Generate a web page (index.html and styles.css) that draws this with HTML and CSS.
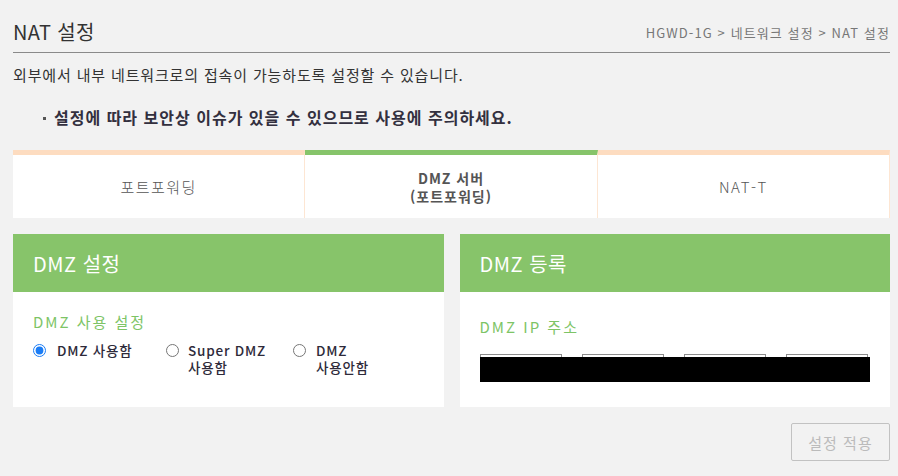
FILE: index.html
```html
<!DOCTYPE html>
<html lang="ko">
<head>
  <meta charset="UTF-8">
  <meta name="viewport" content="width=device-width, initial-scale=1.0">
  <title>NAT 설정</title>
  <link rel="stylesheet" href="styles.css">
</head>
<body>
  <div id="page">
    <!-- Title + breadcrumb -->
    <div class="page-head">
      <h1>NAT 설정</h1>
      <div class="crumb">HGWD-1G &gt; 네트워크 설정 &gt; NAT 설정</div>
    </div>
    <p class="desc">외부에서 내부 네트워크로의 접속이 가능하도록 설정할 수 있습니다.</p>
    <p class="notice">설정에 따라 보안상 이슈가 있을 수 있으므로 사용에 주의하세요.</p>

    <!-- Tabs -->
    <div class="tabs">
      <div class="tab">포트포워딩</div>
      <div class="tab active">DMZ 서버<br>(포트포워딩)</div>
      <div class="tab last">NAT-T</div>
    </div>

    <!-- Panels -->
    <div class="panels">
      <div class="panel">
        <div class="panel-head">DMZ 설정</div>
        <div class="panel-body">
          <div class="field-title">DMZ 사용 설정</div>
          <div class="radios">
            <label class="radio r1"><input type="radio" name="dmz" checked><span>DMZ 사용함</span></label>
            <label class="radio r2"><input type="radio" name="dmz"><span>Super DMZ<br>사용함</span></label>
            <label class="radio r3"><input type="radio" name="dmz"><span>DMZ<br>사용안함</span></label>
          </div>
        </div>
      </div>
      <div class="panel">
        <div class="panel-head">DMZ 등록</div>
        <div class="panel-body ip-body">
          <div class="field-title">DMZ IP 주소</div>
          <div class="ip-row">
            <input type="text" class="ip">
            <input type="text" class="ip">
            <input type="text" class="ip">
            <input type="text" class="ip">
            <div class="redact"></div>
          </div>
        </div>
      </div>
    </div>

    <div class="actions">
      <button class="btn" disabled>설정 적용</button>
    </div>
  </div>
</body>
</html>
```

FILE: styles.css
```css
body {
  margin: 0;
  padding: 0 8px 0 13px;
  background-color: #f2f2f2;
  font-family: "Noto Sans CJK KR", sans-serif;
  color: #333;
}
#page {
  width: 877px;
}
/* Title row */
.page-head {
  display: flex;
  justify-content: space-between;
  align-items: center;
  height: 40px;
  padding-top: 12px;
  border-bottom: 1px solid #8a8a8a;
}
.page-head h1 {
  margin: 0;
  font-size: 20px;
  font-weight: normal;
  line-height: 28px;
  letter-spacing: 0.3px;
  color: #333;
}
.crumb {
  font-size: 13px;
  color: #777;
  line-height: 18px;
  letter-spacing: 1.1px;
  margin-top: 2px;
}
.desc {
  margin: 11px 0 0;
  font-size: 15px;
  line-height: 22px;
  letter-spacing: 0.85px;
}
.notice {
  position: relative;
  margin: 19px 0 0;
  padding-left: 41px;
  font-size: 16px;
  font-weight: bold;
  line-height: 24px;
  letter-spacing: 1px;
  color: #33303f;
}
.notice::before {
  content: "";
  position: absolute;
  left: 30px;
  top: 12px;
  width: 3px;
  height: 3px;
  background: #555;
}
/* Tabs */
.tabs {
  display: grid;
  grid-template-columns: 1fr 1fr 1fr;
  margin-top: 21px;
}
.tab {
  height: 63px;
  display: flex;
  align-items: center;
  justify-content: center;
  text-align: center;
  background: #fff;
  border-top: 5px solid #fddcc0;
  border-right: 1px solid #fde6d3;
  font-size: 15px;
  font-weight: 300;
  letter-spacing: 1.5px;
  line-height: 18px;
  color: #555;
}
.tab.active {
  border-top-color: #86c46a;
  font-size: 14px;
  letter-spacing: 1px;
  font-weight: bold;
  color: #555;
}
.tab.last {
  border-right: 1px solid #fde6d3;
}
/* Panels */
.panels {
  display: grid;
  grid-template-columns: 1fr 1fr;
  gap: 16px;
  margin-top: 16px;
}
.panel {
  background: #fff;
}
.panel-head {
  height: 58px;
  display: flex;
  align-items: center;
  padding-left: 20px;
  background: #87c46a;
  color: #fff;
  font-size: 20px;
  letter-spacing: 0.5px;
}
.panel-body {
  height: 94px;
  padding: 20px 20px 0;
}
.ip-body {
  height: 90px;
  padding-top: 25px;
}
.field-title {
  font-size: 15px;
  line-height: 20px;
  letter-spacing: 2px;
  color: #7dc466;
}
.radios {
  display: flex;
  margin-top: 10px;
}
.radio {
  display: flex;
  align-items: flex-start;
  font-size: 13.5px;
  font-weight: 500;
  line-height: 17px;
  letter-spacing: 0.8px;
  color: #2e2a3a;
}
.radio input {
  width: 13px;
  height: 13px;
  margin: 2px 11px 0 0;
  accent-color: #1a7cf5;
}
.r1 { width: 133px; }
.r2 { width: 127px; }
.r2 input { margin-right: 9px; }
.r3 input { margin-right: 10px; }
/* IP address */
.ip-row {
  position: relative;
  display: flex;
  gap: 20px;
  margin-top: 17px;
}
.ip {
  width: 82px;
  height: 28px;
  box-sizing: border-box;
  border: 1px solid #8c8c8c;
  margin: 0;
  padding: 0;
}
.redact {
  position: absolute;
  left: 0;
  top: 3px;
  width: 390px;
  height: 25px;
  background: #000;
}
/* Apply button */
.actions {
  display: flex;
  justify-content: flex-end;
  margin-top: 16px;
}
.btn {
  width: 99px;
  height: 38px;
  background: #f2f2f2;
  border: 1px solid #c2c2c2;
  border-radius: 2px;
  font-family: "Noto Sans CJK KR", sans-serif;
  font-size: 15px;
  letter-spacing: 1px;
  color: #bbb;
}
```
